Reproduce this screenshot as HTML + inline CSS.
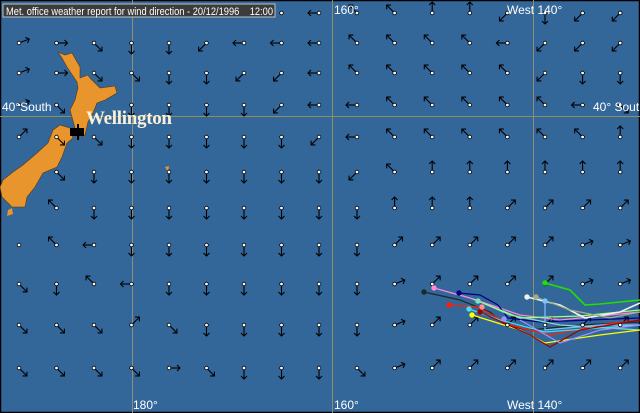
<!DOCTYPE html>
<html><head><meta charset="utf-8"><style>
html,body{margin:0;padding:0;background:#336699;}
#w{position:relative;width:640px;height:413px;overflow:hidden;background:#336699;}
svg{position:absolute;left:0;top:0}
.lbl{font-family:"Liberation Sans",sans-serif;font-size:12px;fill:#fff}
</style></head><body><div id="w">
<svg id="s" width="640" height="413" viewBox="0 0 640 413">
<rect x="0.5" y="0.5" width="639" height="412" fill="#336699" stroke="#000" stroke-width="1.5"/>
<line x1="132.5" y1="0" x2="132.5" y2="413" stroke="#8f8f78" stroke-width="1"/>
<line x1="332.5" y1="0" x2="332.5" y2="413" stroke="#8f8f60" stroke-width="1"/>
<line x1="533.5" y1="0" x2="533.5" y2="413" stroke="#8f8f78" stroke-width="1"/>
<line x1="0" y1="116.5" x2="640" y2="116.5" stroke="#8f8f60" stroke-width="1"/>
<polygon fill="#e8952e" stroke="#5a3a10" stroke-width="0.6" points="58,52 65,55 72,53 80,67 80,78 88,75 90,78 100,88 115,86 117,93 105,100 97,103 93,113 88,122 85,135 80,137 75,128 70,110 75,100 78,88 77,82 67,67 62,58"/>
<polygon fill="#e8952e" stroke="#5a3a10" stroke-width="0.6" points="70,128 60,125 53,130 48,143 37,153 23,165 13,172 3,180 0,187 2,197 12,207 25,207 27,197 35,187 43,173 57,167 62,157 67,143 73,138"/>
<polygon fill="#e8952e" points="8,210 12,208 13,214 7,216"/>
<polygon fill="#e8952e" points="165,167 169,166 168,172"/>
<rect x="70" y="128" width="14" height="8" fill="#000"/>
<line x1="78" y1="124" x2="78" y2="140" stroke="#000" stroke-width="2"/>
<g id="arrows" stroke="#000" stroke-width="1.1" fill="none"></g>
<text x="86" y="124" font-family="Liberation Serif,serif" font-weight="bold" font-size="19" fill="#f8f0d8" textLength="86">Wellington</text>
<g id="tracks" fill="none" stroke-width="1.2">
<polyline stroke="#1a2a2a" points="424,292 460,300 490,312 505,325 530,330 580,325 640,322"/>
<polyline stroke="#ff88dd" points="434,288 470,298 520,315 560,320 640,312"/>
<polyline stroke="#000088" points="459,293 480,295 498,305 508,318 540,322 640,318"/>
<polyline stroke="#ff2000" points="449,305 478,307 510,325 550,335 600,325 640,320"/>
<polyline stroke="#80e0c0" points="478,301 510,315 560,325 640,330"/>
<polyline stroke="#40e0f0" points="469,309 500,320 545,332 640,325"/>
<polyline stroke="#ffff00" points="472,315 520,330 545,343 600,335 640,330"/>
<polyline stroke="#a0ff80" points="473,299 520,318 580,316 640,310"/>
<polyline stroke="#f0f0f0" stroke-width="1.6" points="527,297 560,305 585,318 620,312 640,303"/>
<polyline stroke="#20e000" stroke-width="1.6" points="545,283 570,290 585,305 600,304 640,300"/>
<polyline stroke="#80c0ff" points="545,301 545,330 600,325 640,325"/>
<polyline stroke="#a00000" points="480,312 530,335 550,347 580,330 640,320"/>
<polyline stroke="#a090ff" points="520,320 560,343 600,330 640,325"/>
<polyline stroke="#a0b080" points="536,297 570,310 610,318 640,312"/>
</g>
<g id="dots" stroke="none"></g>
<text class="lbl" x="2" y="111">40°South</text>
<text class="lbl" x="133" y="409">180°</text>
<text class="lbl" x="334" y="14">160°</text>
<text class="lbl" x="334" y="409">160°</text>
<text class="lbl" x="507" y="14">West 140°</text>
<text class="lbl" x="507" y="409">West 140°</text>
<text class="lbl" x="593" y="111">40° South</text>
<rect x="3" y="4" width="272" height="13" fill="#3c3c3c" stroke="#c0c0c0" stroke-width="1"/>
<text x="6" y="15" font-family="Liberation Sans,sans-serif" font-size="11" fill="#fff" xml:space="preserve" textLength="267" lengthAdjust="spacingAndGlyphs">Met. office weather report for wind direction - 20/12/1996    12:00</text>
</svg>
<script>
var ys=[13,43,73,105,137,172,208,245,284,325,368];
var xs=[];for(var i=0;i<9;i++)xs.push(19+37.5*i);for(i=0;i<8;i++)xs.push(357+37.6*i);
var L=["x x x x x x x . W","e E SE S S SW W W W","e E SE SE S S SW SW W","e SE x S S S S SW W","NE SE SE S S S S S SW","x SE S S S S S S S","x NW S S S S S S S",". NW W S S S S S S","SE S NW W S S S S S","SE SE SE NE SE S S S S","SE SE SE SE E SE S S S"];
var R=["NW NW N N SW S SW SW","NW NW NW NW W SW SW SW","NW NW NW NW NW SW S S","W NW NW NW NW NW W SE","W NW NW NW NW NW NW N","SW NW N N N N N N","S N N N NE NE NE NE","S NE NE NE NE NE e e","S e NE NE NE NE e e","S e NE NE NE NE NE NE","SE e NE NE NE NE NE NE"];
var V={N:[0,-1],S:[0,1],E:[1,0],W:[-1,0],NE:[.72,-.72],NW:[-.72,-.72],SE:[.72,.72],SW:[-.72,.72],e:[.93,-.36]};
var h="",d="";
for(var r=0;r<11;r++){var c=(L[r]+" "+R[r]).split(" ");
for(var k=0;k<c.length;k++){var x=xs[k],y=ys[r],t=c[k];if(t=="x")continue;if(r==0&&x<280)continue;
if(V[t]){var v=V[t],ln=11,ex=x+v[0]*ln,ey=y+v[1]*ln;
var px=-v[1],py=v[0],a=3;
h+='<line x1="'+x+'" y1="'+y+'" x2="'+ex+'" y2="'+ey+'"/>';
h+='<polyline points="'+(ex-v[0]*a+px*a)+','+(ey-v[1]*a+py*a)+' '+ex+','+ey+' '+(ex-v[0]*a-px*a)+','+(ey-v[1]*a-py*a)+'"/>';}
d+='<circle cx="'+x+'" cy="'+y+'" r="1.8" fill="#fff" stroke="#000" stroke-width="0.8"/>';}}
document.getElementById("arrows").innerHTML=h;
var tp=[[424,292,"#1a2a2a"],[434,288,"#ff88dd"],[459,293,"#000088"],[449,305,"#ff2000"],[478,301,"#80e0c0"],[469,309,"#40e0f0"],[472,315,"#ffff00"],[480,312,"#a00000"],[482,307,"#ff9090"],[527,297,"#f0f0f0"],[536,297,"#a0b080"],[545,283,"#20e000"],[545,301,"#80c0ff"],[504,319,"#a090ff"]];
for(i=0;i<tp.length;i++)d+='<circle cx="'+tp[i][0]+'" cy="'+tp[i][1]+'" r="2.7" fill="'+tp[i][2]+'"/>';
document.getElementById("dots").innerHTML=d;
</script>
</div></body></html>
